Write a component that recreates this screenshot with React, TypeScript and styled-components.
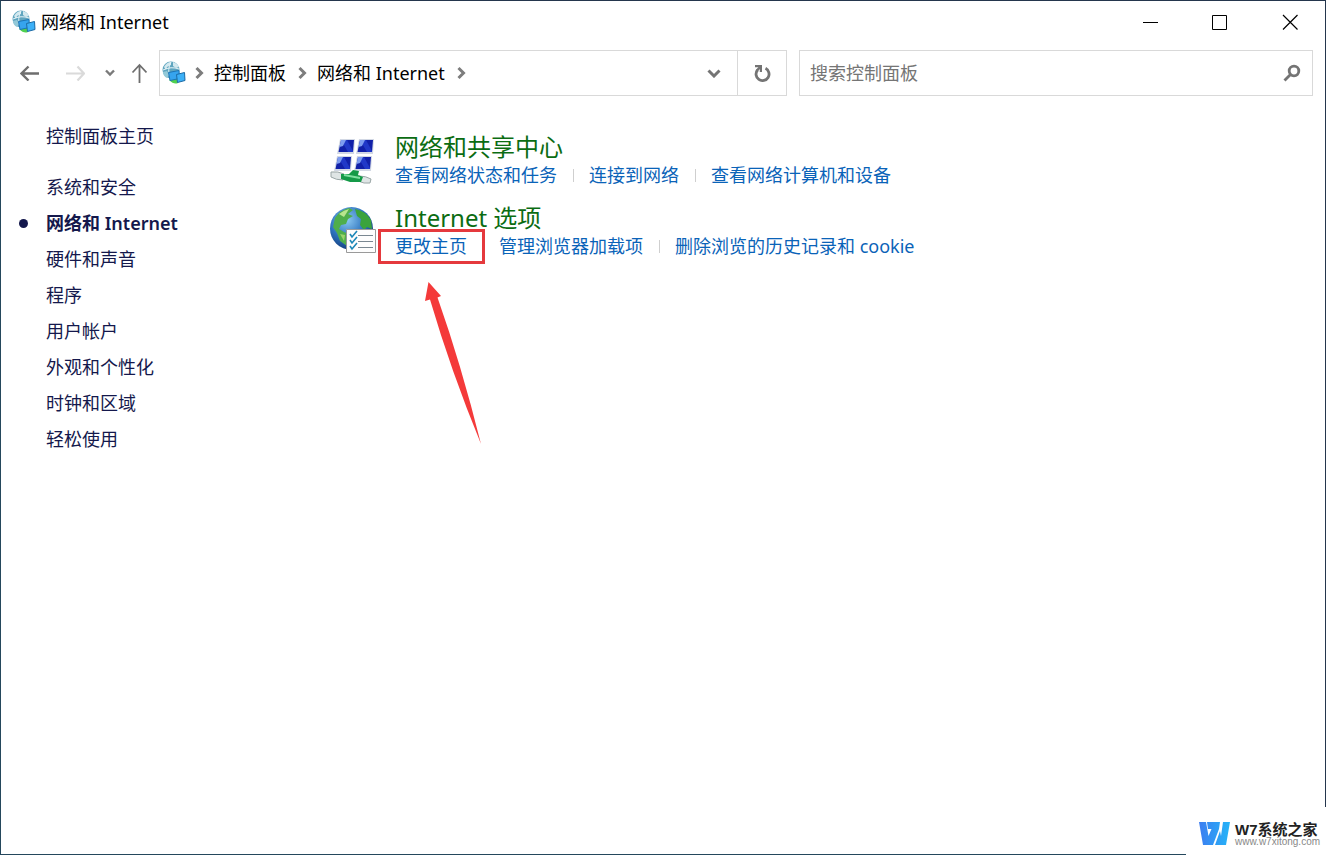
import React from 'react';
import styled, { createGlobalStyle, css } from 'styled-components';

const GlobalStyle = createGlobalStyle`
  *, *::before, *::after { box-sizing: border-box; }
  body {
    margin: 0;
    background: #fff;
    color: #000;
    font-family: "Noto Sans", "Noto Sans CJK SC", sans-serif;
    font-size: 18px;
    line-height: 24px;
  }
  a { color: inherit; text-decoration: none; }
  button {
    padding: 0;
    border: 0;
    background: none;
    font: inherit;
    color: inherit;
  }
  svg { display: block; flex: none; }
`;

const Window = styled.div`
  position: relative;
  display: flex;
  flex-direction: column;
  min-height: 100vh;
  border: 1px solid #24475c;
  border-top-color: #24364d;
  border-right-color: #24364d;
`;

const TitleBar = styled.header`
  display: flex;
  align-items: center;
  height: 42px;
  padding-left: 11px;
`;

const WindowTitle = styled.h1`
  flex: 1;
  margin: 0 0 0 5px;
  font-size: 18px;
  font-weight: 400;
`;

const CaptionButton = styled.button`
  display: grid;
  place-items: center;
  width: 70px;
  height: 42px;
`;

const Toolbar = styled.div`
  display: flex;
  align-items: center;
  padding: 7px 12px 0 12px;
`;

const NavButton = styled.button<{ $width: number }>`
  display: grid;
  place-items: center;
  width: ${(p) => p.$width}px;
  height: 46px;
`;

const Fields = styled.div`
  display: grid;
  flex: 1;
  grid-template-columns: 628fr 514fr;
  gap: 12px;
`;

const fieldBox = css`
  display: flex;
  align-items: center;
  height: 46px;
  border: 1px solid #d9d9d9;
`;

const AddressBar = styled.div`
  ${fieldBox}
  padding-left: 2px;
`;

const Breadcrumbs = styled.nav`
  display: flex;
  flex: 1;
  align-items: center;
`;

const Crumb = styled.a`
  margin: 0 3px;
`;

const AddressButton = styled.button<{ $divided?: boolean }>`
  display: grid;
  place-items: center;
  width: 49px;
  height: 44px;
  border-left: ${(p) => (p.$divided ? '1px solid #d9d9d9' : '0')};
`;

const SearchBox = styled.form`
  ${fieldBox}
  padding: 0 11px 0 10px;
`;

const SearchInput = styled.input`
  flex: 1;
  min-width: 0;
  padding: 0;
  border: 0;
  outline: 0;
  background: none;
  font: inherit;
  &::placeholder { color: #757575; opacity: 1; }
`;

const Body = styled.div`
  display: flex;
  flex: 1;
`;

const Sidebar = styled.nav`
  width: 328px;
  flex: none;
  padding: 28px 0 0 45px;
  color: #14184c;
`;

const SidebarHome = styled.a`
  display: block;
  margin-bottom: 27px;
`;

const SidebarList = styled.ul`
  display: grid;
  gap: 12px;
  margin: 0;
  padding: 0;
  list-style: none;
`;

const SidebarItem = styled.li<{ $current?: boolean }>`
  position: relative;
  font-weight: ${(p) => (p.$current ? 600 : 400)};
  ${(p) =>
    p.$current &&
    css`
      &::before {
        content: '';
        position: absolute;
        top: 8px;
        left: -27px;
        width: 9px;
        height: 9px;
        border-radius: 50%;
        background: currentColor;
      }
    `}
`;

const Categories = styled.main`
  display: grid;
  flex: 1;
  align-content: start;
  gap: 11px;
  padding-top: 36px;
`;

const Category = styled.section`
  display: flex;
  height: 60px;
`;

const CategoryIcon = styled.div`
  width: 66px;
  flex: none;
  padding: 4px 0 0 1px;
`;

const CategoryTitle = styled.h2`
  margin: 0 0 1px;
  color: #0b6c12;
  font-size: 24px;
  font-weight: 400;
  line-height: 30px;
`;

const Tasks = styled.ul`
  display: flex;
  margin: 0;
  padding: 0;
  list-style: none;
  color: #0a63b8;
`;

const Task = styled.li`
  position: relative;
  display: flex;
  align-items: center;
  white-space: nowrap;
  & + &::before {
    content: '';
    width: 1px;
    height: 13px;
    margin: 0 15px 0 16px;
    background: #cfcfcf;
  }
`;

const Highlight = styled.span`
  position: absolute;
  z-index: 1;
  top: -5px;
  left: -17px;
  right: -18px;
  bottom: -6px;
  border: 3px solid #e5393d;
  pointer-events: none;
`;

const Pointer = styled.svg`
  position: absolute;
  top: 47px;
  left: 29px;
  pointer-events: none;
`;

const Watermark = styled.aside`
  position: absolute;
  right: -1px;
  bottom: -1px;
  display: flex;
  align-items: center;
  width: 140px;
  height: 48px;
  padding: 6px 0 0 13px;
  gap: 4px;
  background: #fff;
`;

const Brand = styled.div`
  color: #222;
  font: 700 15px/16px "Liberation Sans", "Noto Sans CJK SC", sans-serif;
  white-space: nowrap;
`;

const BrandUrl = styled.div`
  color: #888;
  font: 10px/8px "Liberation Sans", sans-serif;
`;

const NetworkGlobe = () => (
  <svg width="24" height="24" viewBox="0 0 24 24" aria-hidden="true">
    <circle cx="9" cy="9" r="8.500" fill="#5fa5bf" />
    <path d="M2 6 Q5 1 9 1 L9 4 L5 6 L4 9Z M11 1 Q15 2 17 6 L14 7 L11 5Z" fill="#d3e8ee" />
    <path d="M1 11 L5 10 L7 14 L5 17 Q1 15 1 11Z" fill="#94c9d8" />
    <path d="M9 1 Q5 8 8 17 M1 9 Q9 5 17 8" stroke="#e5f3f7" fill="none" />
    <path d="M7 19 Q12 24 16 22 L15 17Z" fill="#4fd04f" />
    <path d="M6.500 11.500 L17 9.500 L17.500 17.500 L8 19.500Z" fill="#36a4ee" stroke="#1b74b5" />
    <path d="M14.500 13.500 L22.500 11.500 L23 19.500 L15.500 21.500Z" fill="#3cb0f7" stroke="#1b6aa5" />
  </svg>
);

const Monitor = ({ x, y }: { x: number; y: number }) => (
  <g transform={`translate(${x} ${y})`}>
    <path d="M3 0 H18 L17 15 H0Z" fill="#d2d8e4" />
    <path d="M4 1 H17 L16 13 H1.500Z" fill="#1120a8" />
    <path d="M4 1 H10 L16 12 L16 13 H11Z" fill="#2038c8" />
    <path d="M4 1 H9 L6 7 L2.500 8Z" fill="#7d9cf0" />
  </g>
);

const SharingIcon = () => (
  <svg width="48" height="48" viewBox="0 0 48 48" aria-hidden="true">
    <Monitor x={7} y={3} />
    <Monitor x={26} y={3} />
    <Monitor x={4} y={20} />
    <Monitor x={24} y={20} />
    <path d="M1 36 Q8 35 14 38 L13 44 Q6 44 1 41Z M29 40 Q36 40 41 43 L40 47 Q34 48 28 45Z" fill="#dfe5e5" stroke="#9aa6a6" />
    <path d="M11 38 L19 38 L23 34 L29 35 L28 39 L33 41 L31 46 L20 46 L11 43Z" fill="#159a48" />
    <path d="M14 39 L30 42" stroke="#7fe0a0" strokeWidth="2" />
  </svg>
);

const InternetOptionsIcon = () => (
  <svg width="48" height="48" viewBox="0 0 48 48" aria-hidden="true">
    <defs>
      <radialGradient id="ocean" cx="0.4" cy="0.3" r="0.7">
        <stop offset="0" stopColor="#8bc8f2" />
        <stop offset="0.6" stopColor="#2c72bd" />
        <stop offset="1" stopColor="#153f80" />
      </radialGradient>
    </defs>
    <circle cx="21.500" cy="21.500" r="21.500" fill="url(#ocean)" />
    <path d="M5 11 Q10 3 19 1 L23 3 L18 7 L23 9 L18 12 L16 17 L11 18 L9 22 L14 25 L19 27 L17 39 L10 34 L7 26 L3 20Z" fill="#4fae4b" />
    <path d="M25 2 Q36 4 41 13 L42 22 L37 20 L34 23 L30 18 L31 12 L27 9Z" fill="#3ba33c" />
    <path d="M9 7 Q14 3 19 2 L14 10Z" fill="#b9e58f" />
    <path d="M10 27 L15 28 L14 34Z" fill="#9bd36a" />
    <path d="M16.500 22.500 H45.500 V45.500 H16.500Z" fill="#fdfdfd" stroke="#9a9a9a" />
    <path d="M28 28.500 H43 M28 34.500 H43 M28 40.500 H43" stroke="#7a8791" />
    <path d="M20 27 L22 30 L27 24 M20 33 L22 36 L27 30 M20 39 L22 42 L27 36" fill="none" stroke="#1c87b8" strokeWidth="1.600" />
  </svg>
);

const CrumbChevron = () => (
  <svg width="25" height="14" viewBox="0 0 25 14" aria-hidden="true">
    <path d="M10.500 2 L15.500 7 L10.500 12" fill="none" stroke="#7d7d7d" strokeWidth="3" />
  </svg>
);

const categories = [
  {
    title: '网络和共享中心',
    icon: <SharingIcon />,
    tasks: ['查看网络状态和任务', '连接到网络', '查看网络计算机和设备'],
  },
  {
    title: 'Internet 选项',
    icon: <InternetOptionsIcon />,
    tasks: ['更改主页', '管理浏览器加载项', '删除浏览的历史记录和 cookie'],
  },
];

const sections = [
  '系统和安全',
  '网络和 Internet',
  '硬件和声音',
  '程序',
  '用户帐户',
  '外观和个性化',
  '时钟和区域',
  '轻松使用',
];

const currentSection = '网络和 Internet';
const highlightedTask = '更改主页';

export default function App() {
  return (
    <Window lang="zh-CN">
      <GlobalStyle />
      <TitleBar>
        <NetworkGlobe />
        <WindowTitle>网络和 Internet</WindowTitle>
        <CaptionButton aria-label="最小化">
          <svg width="16" height="16" viewBox="0 0 16 16">
            <path d="M1 8.500 H16" stroke="#000" />
          </svg>
        </CaptionButton>
        <CaptionButton aria-label="最大化">
          <svg width="16" height="16" viewBox="0 0 16 16">
            <path d="M0.500 1.500 H14.500 V15.500 H0.500Z" fill="none" stroke="#000" />
          </svg>
        </CaptionButton>
        <CaptionButton aria-label="关闭">
          <svg width="16" height="16" viewBox="0 0 16 16">
            <path d="M1 1 L15.500 15.500 M15.500 1 L1 15.500" stroke="#000" strokeWidth="1.200" />
          </svg>
        </CaptionButton>
      </TitleBar>

      <Toolbar>
        <NavButton $width={34} aria-label="后退">
          <svg width="20" height="16" viewBox="0 0 20 16">
            <path d="M1.500 8.500 H19 M8.500 1.500 L1.500 8.500 L8.500 15.500" fill="none" stroke="#6e6e6e" strokeWidth="2.400" />
          </svg>
        </NavButton>
        <NavButton $width={56} aria-label="前进">
          <svg width="20" height="16" viewBox="0 0 20 16">
            <path d="M1 8.500 H19 M12.500 1.500 L19 8.500 L12.500 15.500" fill="none" stroke="#dadada" strokeWidth="2.200" />
          </svg>
        </NavButton>
        <NavButton $width={14} aria-label="最近浏览的位置">
          <svg width="10" height="8" viewBox="0 0 10 8">
            <path d="M1 1.500 L5 5.500 L9 1.500" fill="none" stroke="#7a7a7a" strokeWidth="2.400" />
          </svg>
        </NavButton>
        <NavButton $width={42} aria-label="上移">
          <svg width="18" height="20" viewBox="0 0 18 20">
            <path d="M10.500 20 V2 M3.500 9.500 L10.500 2 L17.500 9.500" fill="none" stroke="#6e6e6e" strokeWidth="1.800" />
          </svg>
        </NavButton>
        <Fields>
          <AddressBar>
            <Breadcrumbs aria-label="地址">
              <NetworkGlobe />
              <CrumbChevron />
              <Crumb href="#control-panel">控制面板</Crumb>
              <CrumbChevron />
              <Crumb href="#network">网络和 Internet</Crumb>
              <CrumbChevron />
            </Breadcrumbs>
            <AddressButton aria-label="展开地址">
              <svg width="16" height="10" viewBox="0 0 16 10">
                <path d="M3.500 2.500 L9 8 L14.500 2.500" fill="none" stroke="#747474" strokeWidth="3" />
              </svg>
            </AddressButton>
            <AddressButton $divided aria-label="刷新">
              <svg width="18" height="18" viewBox="0 0 18 18">
                <path d="M4.500 6 A6.500 6.500 0 1 0 12.500 4.300" fill="none" stroke="#747474" strokeWidth="2.800" />
                <path d="M2 1 H9 V8 H6.800 V3.300 H2Z" fill="#747474" />
                <path d="M7.500 2.500 L4 6.500" stroke="#747474" strokeWidth="2.600" />
              </svg>
            </AddressButton>
          </AddressBar>
          <SearchBox role="search">
            <SearchInput type="search" aria-label="搜索控制面板" placeholder="搜索控制面板" />
            <button type="submit" aria-label="搜索">
              <svg width="18" height="18" viewBox="0 0 18 18">
                <circle cx="11" cy="7" r="4.800" fill="none" stroke="#747474" strokeWidth="2.800" />
                <path d="M7.500 10.500 L1.500 16.500" stroke="#747474" strokeWidth="2.800" />
              </svg>
            </button>
          </SearchBox>
        </Fields>
      </Toolbar>

      <Body>
        <Sidebar aria-label="控制面板">
          <SidebarHome href="#home">控制面板主页</SidebarHome>
          <SidebarList>
            {sections.map((name) => (
              <SidebarItem key={name} $current={name === currentSection}>
                <a href="#section">{name}</a>
              </SidebarItem>
            ))}
          </SidebarList>
        </Sidebar>
        <Categories>
          {categories.map(({ title, icon, tasks }) => (
            <Category key={title}>
              <CategoryIcon>{icon}</CategoryIcon>
              <div>
                <CategoryTitle>
                  <a href="#category">{title}</a>
                </CategoryTitle>
                <Tasks>
                  {tasks.map((task) => (
                    <Task key={task}>
                      <a href="#task">{task}</a>
                      {task === highlightedTask && (
                        <>
                          <Highlight />
                          <Pointer width="60" height="164" viewBox="0 0 60 164" aria-hidden="true">
                            <path
                              d="M4.500 1 L17 15 L13.500 16.500 Q37 83 57 163 Q27 90 6 18.500 L1 20Z"
                              fill="#f43a3a"
                            />
                          </Pointer>
                        </>
                      )}
                    </Task>
                  ))}
                </Tasks>
              </div>
            </Category>
          ))}
        </Categories>
      </Body>

      <Watermark>
        <svg width="32" height="24" viewBox="0 0 32 24" aria-hidden="true">
          <defs>
            <linearGradient id="brand" x1="0" y1="0" x2="1" y2="0">
              <stop offset="0" stopColor="#3d7df0" />
              <stop offset="1" stopColor="#25b4f8" />
            </linearGradient>
          </defs>
          <path
            d="M0 0 H7 L9.500 14 L12.500 7 H9 L8 0 H21 L20 7 L14 23 H4Z M24 0 H31 L27 23 H16 L21 9 L22 14Z"
            fill="url(#brand)"
          />
        </svg>
        <div>
          <Brand>W7系统之家</Brand>
          <BrandUrl>www.w7xitong.com</BrandUrl>
        </div>
      </Watermark>
    </Window>
  );
}
